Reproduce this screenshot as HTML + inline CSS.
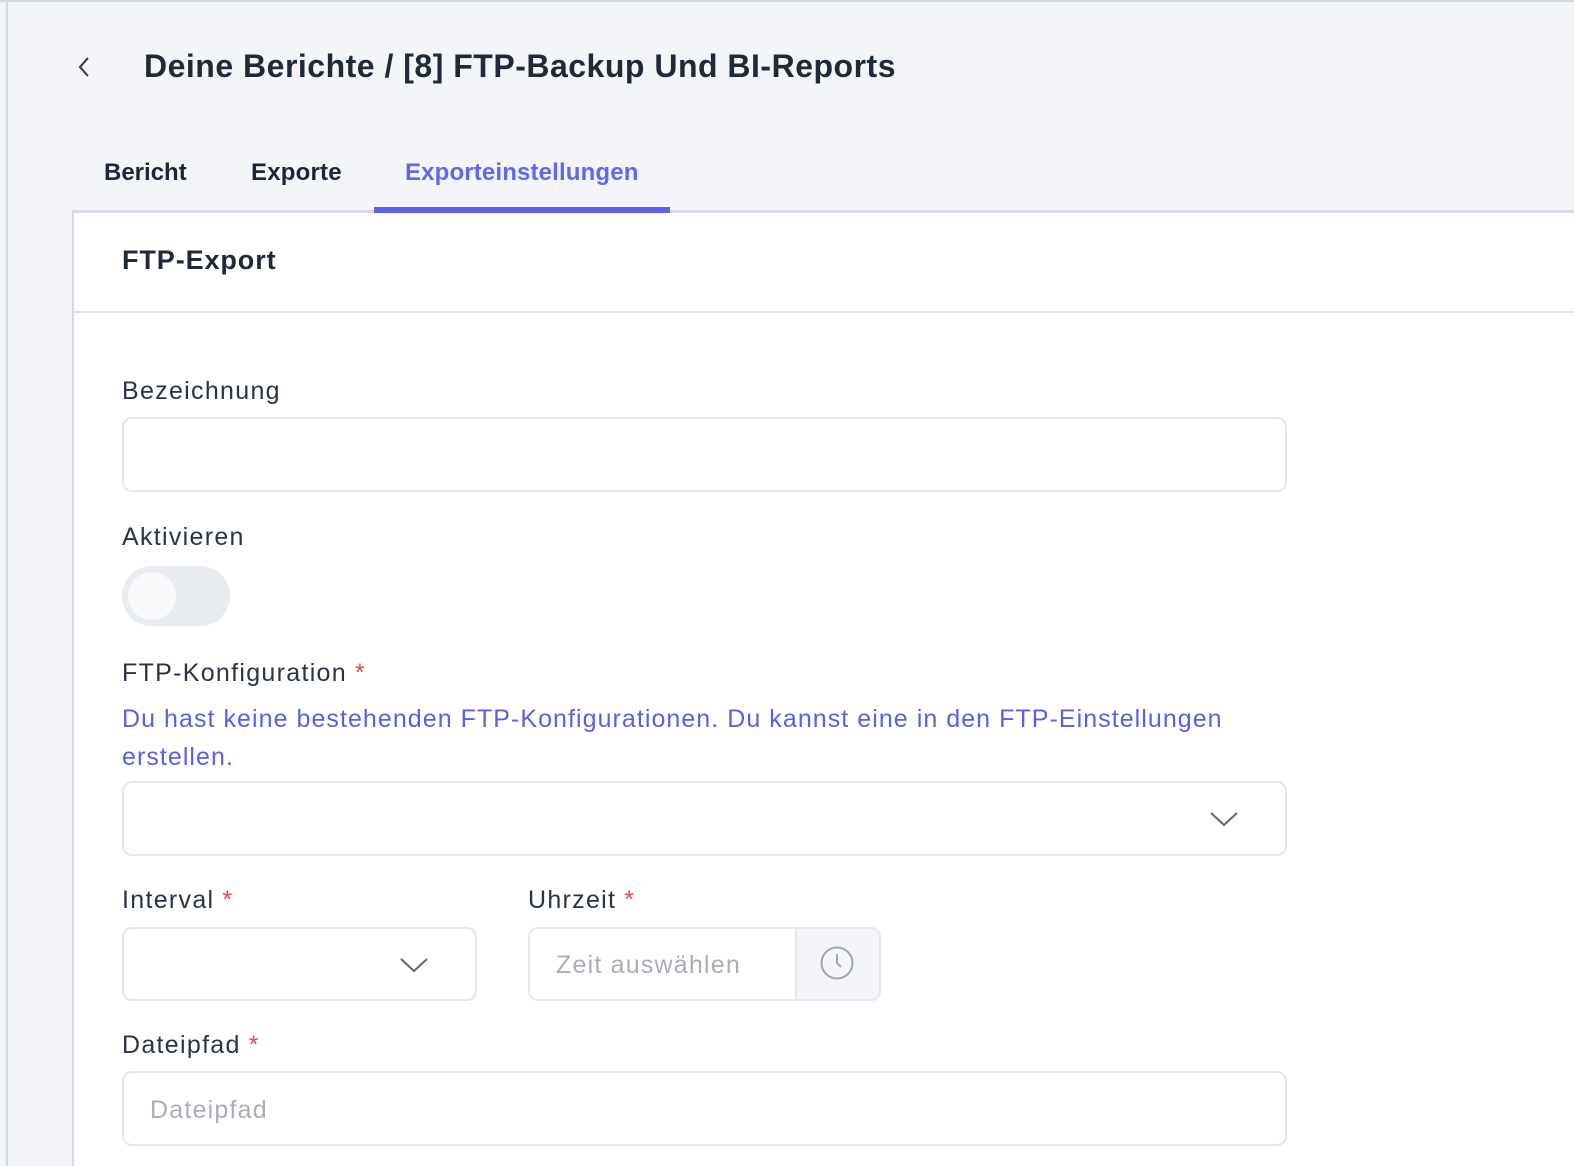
<!DOCTYPE html>
<html><head><meta charset="utf-8"><style>
*{margin:0;padding:0;box-sizing:border-box}
html,body{width:1574px;height:1166px;overflow:hidden}
body{background:#f3f5f8;font-family:"Liberation Sans",sans-serif;color:#1f2937;position:relative}
.a{position:absolute}
.lbl{font-size:25px;color:#2b3444;letter-spacing:1.3px}
.req{color:#e5484d;margin-left:8px}
.inp{border:2px solid #e4e7ee;border-radius:10px;background:#fff}
.ph{font-size:25px;color:#a9adba;letter-spacing:1.2px}
</style></head><body>
<div class="a" style="left:0;top:0;width:1574px;height:2px;background:#d5d9e0"></div>
<div class="a" style="left:6px;top:0;width:2px;height:1166px;background:#d5d9e0"></div>
<svg class="a" style="left:76px;top:55px" width="16" height="24" viewBox="0 0 16 24"><path d="M12 3L4 12L12 21" fill="none" stroke="#333" stroke-width="2"/></svg>
<div class="a" style="left:144px;top:48px;font-size:32px;font-weight:bold;color:#1f2937;letter-spacing:0.5px">Deine Berichte / [8] FTP-Backup Und BI-Reports</div>
<div class="a" style="left:104px;top:159px;font-size:24px;font-weight:bold;color:#1e2538">Bericht</div>
<div class="a" style="left:251px;top:159px;font-size:24px;font-weight:bold;color:#1e2538;letter-spacing:0.2px">Exporte</div>
<div class="a" style="left:405px;top:159px;font-size:24px;font-weight:bold;color:#6366f1;letter-spacing:0.15px">Exporteinstellungen</div>
<div class="a" style="left:72px;top:210px;width:1502px;height:960px;background:#fff;border-top:3px solid #d5d9e0;border-left:2px solid #d5d9e0"></div>
<div class="a" style="left:374px;top:207px;width:296px;height:6px;background:#5f63e6"></div>
<div class="a" style="left:74px;top:311px;width:1500px;height:2px;background:#dfe2e8"></div>
<div class="a" style="left:122px;top:245px;font-size:27px;font-weight:bold;color:#1f2937;letter-spacing:0.9px">FTP-Export</div>
<div class="a lbl" style="left:122px;top:377px">Bezeichnung</div>
<div class="a inp" style="left:122px;top:417px;width:1165px;height:75px"></div>
<div class="a lbl" style="left:122px;top:523px">Aktivieren</div>
<div class="a" style="left:122px;top:566px;width:108px;height:60px;border-radius:30px;background:#e8ebf0"></div>
<div class="a" style="left:128px;top:572px;width:48px;height:48px;border-radius:50%;background:#f8f9fb"></div>
<div class="a lbl" style="left:122px;top:659px">FTP-Konfiguration<span class="req">*</span></div>
<div class="a" style="left:122px;top:700px;font-size:25px;color:#5b5fe0;line-height:38px;width:1160px;letter-spacing:1.05px">Du hast keine bestehenden FTP-Konfigurationen. Du kannst eine in den FTP-Einstellungen erstellen.</div>
<div class="a inp" style="left:122px;top:781px;width:1165px;height:75px"></div>
<svg class="a" style="left:1209px;top:810px" width="30" height="18" viewBox="0 0 30 18"><path d="M2 3L15 15L28 3" fill="none" stroke="#666" stroke-width="2"/></svg>
<div class="a lbl" style="left:122px;top:886px">Interval<span class="req">*</span></div>
<div class="a inp" style="left:122px;top:927px;width:355px;height:74px"></div>
<svg class="a" style="left:399px;top:956px" width="30" height="18" viewBox="0 0 30 18"><path d="M2 3L15 15L28 3" fill="none" stroke="#666" stroke-width="2"/></svg>
<div class="a lbl" style="left:528px;top:886px">Uhrzeit<span class="req">*</span></div>
<div class="a inp" style="left:528px;top:927px;width:353px;height:74px;overflow:hidden">
<div class="a" style="left:265px;top:0;width:90px;height:74px;background:#f4f5f8;border-left:2px solid #e4e7ee"></div>
</div>
<div class="a ph" style="left:556px;top:951px">Zeit auswählen</div>
<svg class="a" style="left:819px;top:945px" width="36" height="36" viewBox="0 0 36 36"><circle cx="18" cy="18" r="15.5" fill="none" stroke="#a0a4ae" stroke-width="2"/><path d="M18 9V18L22 22" fill="none" stroke="#a0a4ae" stroke-width="2"/></svg>
<div class="a lbl" style="left:122px;top:1031px">Dateipfad<span class="req">*</span></div>
<div class="a inp" style="left:122px;top:1071px;width:1165px;height:75px"></div>
<div class="a ph" style="left:150px;top:1096px">Dateipfad</div>
</body></html>
